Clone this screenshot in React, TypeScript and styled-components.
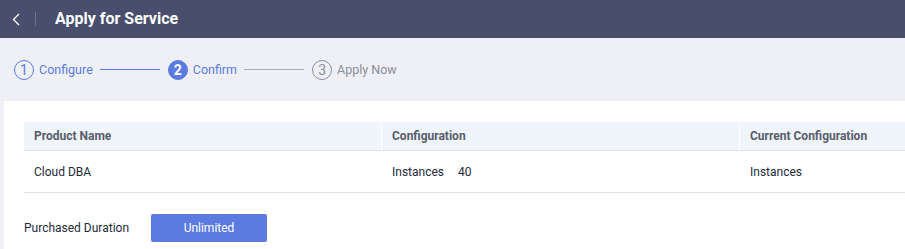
import React from 'react';
import styled, { createGlobalStyle } from 'styled-components';

const GlobalStyle = createGlobalStyle`
  html, body {
    margin: 0;
    padding: 0;
    background: #eff0f5;
    font-family: Roboto, 'Noto Sans', sans-serif;
    overflow: hidden;
  }
`;

const BLUE = '#5b7be0';

const Page = styled.div`
  width: 905px;
  height: 249px;
  display: flex;
  flex-direction: column;
  background: #eff0f5;
`;

const Header = styled.div`
  height: 38px;
  display: flex;
  align-items: center;
  background: #484e6b;
  padding-left: 12px;
  box-sizing: border-box;
`;

const BackButton = styled.div`
  display: flex;
  align-items: center;
  width: 12px;
  height: 14px;
`;

const HeaderDivider = styled.div`
  width: 1px;
  height: 14px;
  background: #6d7390;
  margin: 0 19px 0 11px;
`;

const Title = styled.h1`
  margin: 0 0 1px;
  font-size: 16px;
  font-weight: 700;
  color: #ffffff;
`;

const Steps = styled.div`
  height: 63px;
  display: flex;
  align-items: center;
  padding-left: 14px;
`;

type StepState = 'done' | 'active' | 'todo';

const StepItem = styled.div`
  display: flex;
  align-items: center;
  gap: 5px;
`;

const StepCircle = styled.div<{ $state: StepState }>`
  width: 20px;
  height: 20px;
  box-sizing: border-box;
  border-radius: 50%;
  display: flex;
  align-items: center;
  justify-content: center;
  font-size: 14px;
  border: 1px solid ${({ $state }) => ($state === 'todo' ? '#8a8e99' : BLUE)};
  background: ${({ $state }) => ($state === 'active' ? BLUE : 'transparent')};
  color: ${({ $state }) => ($state === 'active' ? '#fff' : $state === 'done' ? BLUE : '#8a8e99')};
  font-weight: ${({ $state }) => ($state === 'active' ? 700 : 400)};
`;

const StepLabel = styled.span<{ $state: StepState }>`
  font-size: 12.5px;
  color: ${({ $state }) => ($state === 'todo' ? '#8a8e99' : BLUE)};
`;

const StepLine = styled.div<{ $done: boolean }>`
  width: 60px;
  height: 1px;
  margin: 0 8px 0 7px;
  background: ${({ $done }) => ($done ? BLUE : '#a9acb3')};
`;

const Panel = styled.div`
  flex: 1;
  margin-left: 4px;
  background: #ffffff;
  padding: 21px 0 0 20px;
`;

const Table = styled.div`
  display: grid;
  grid-template-columns: 357px 358px 1fr;
`;

const HeadCell = styled.div<{ $divider?: boolean }>`
  height: 28px;
  display: flex;
  align-items: center;
  padding-left: 10px;
  background: #f0f4fb;
  border-bottom: 1px solid #dfe1e6;
  border-left: ${({ $divider }) => ($divider ? '1px solid #ffffff' : 'none')};
  font-size: 12px;
  font-weight: 700;
  color: #575d6c;
  white-space: nowrap;
`;

const BodyCell = styled.div<{ $divider?: boolean }>`
  height: 41px;
  display: flex;
  align-items: center;
  gap: 14px;
  padding-left: ${({ $divider }) => ($divider ? '11px' : '10px')};
  border-bottom: 1px solid #dfe1e6;
  font-size: 12px;
  color: #252b3a;
  white-space: nowrap;
`;

const DurationRow = styled.div`
  display: flex;
  align-items: center;
  margin-top: 21px;
`;

const DurationLabel = styled.span`
  font-size: 12px;
  color: #252b3a;
  width: 127px;
`;

const PrimaryButton = styled.button`
  width: 116px;
  height: 28px;
  border: none;
  border-radius: 2px;
  background: ${BLUE};
  color: #ffffff;
  font-family: inherit;
  font-size: 12px;
  padding: 0;
`;

const steps: { n: number; label: string; state: StepState }[] = [
  { n: 1, label: 'Configure', state: 'done' },
  { n: 2, label: 'Confirm', state: 'active' },
  { n: 3, label: 'Apply Now', state: 'todo' },
];

export default function App() {
  return (
    <Page>
      <GlobalStyle />
      <Header>
        <BackButton>
          <svg width="8" height="13" viewBox="0 0 8 13" fill="none">
            <path d="M7 1L1.5 6.5L7 12" stroke="#ffffff" strokeWidth="1.3" />
          </svg>
        </BackButton>
        <HeaderDivider />
        <Title>Apply for Service</Title>
      </Header>

      <Steps>
        {steps.map((s, i) => (
          <React.Fragment key={s.n}>
            <StepItem>
              <StepCircle $state={s.state}>{s.n}</StepCircle>
              <StepLabel $state={s.state}>{s.label}</StepLabel>
            </StepItem>
            {i < steps.length - 1 && <StepLine $done={s.state === 'done'} />}
          </React.Fragment>
        ))}
      </Steps>

      <Panel>
        <Table>
          <HeadCell>Product Name</HeadCell>
          <HeadCell $divider>Configuration</HeadCell>
          <HeadCell $divider>Current Configuration</HeadCell>
          <BodyCell>Cloud DBA</BodyCell>
          <BodyCell $divider>
            <span>Instances</span>
            <span>40</span>
          </BodyCell>
          <BodyCell $divider>Instances</BodyCell>
        </Table>
        <DurationRow>
          <DurationLabel>Purchased Duration</DurationLabel>
          <PrimaryButton>Unlimited</PrimaryButton>
        </DurationRow>
      </Panel>
    </Page>
  );
}
